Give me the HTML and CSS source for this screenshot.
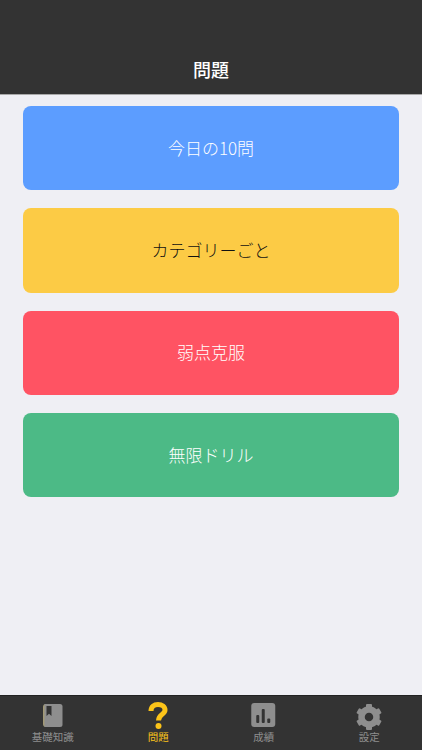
FILE: index.html
```html
<!DOCTYPE html>
<html lang="ja">
<head>
    <meta charset="UTF-8">
    <meta name="viewport" content="width=device-width, initial-scale=1.0">
    <title>問題</title>
    <link rel="stylesheet" href="styles.css">
</head>
<body>
    <div class="app">
        <header class="nav-bar">
            <h1>問題</h1>
        </header>
        <main class="menu">
            <a class="menu-item blue">今日の10問</a>
            <a class="menu-item yellow">カテゴリーごと</a>
            <a class="menu-item red">弱点克服</a>
            <a class="menu-item green">無限ドリル</a>
        </main>
        <nav class="tab-bar">
            <a class="tab">
                <svg class="tab-icon" width="32" height="28" viewBox="0 0 32 28">
                    <path fill="#a39a76" d="M6 5q0-3 3-3h2v23H9q-3 0-3-3z"/>
                    <path fill="#8e8e8e" d="M7.500 2H23q2.500 0 2.500 2.500v18q0 2.500-2.500 2.500H7.500z"/>
                    <path fill="#333" d="M9.500 4h5v10l-2.500-2.200L9.500 14z"/>
                </svg>
                <span>基礎知識</span>
            </a>
            <a class="tab active">
                <svg class="tab-icon" width="32" height="28" viewBox="0 0 32 28">
                    <path fill="none" stroke="#fcc419" stroke-width="5" d="M9 9C9 4.500 12 2.500 16 2.500S23 4.500 23 8C23 12.500 16.500 12.500 16.500 18.500"/>
                    <circle fill="#fcc419" cx="16.500" cy="24" r="3"/>
                </svg>
                <span>問題</span>
            </a>
            <a class="tab">
                <svg class="tab-icon" width="32" height="28" viewBox="0 0 32 28">
                    <rect fill="#8e8e8e" x="3.250" y="1" width="24" height="24" rx="3"/>
                    <rect fill="#333" x="8.250" y="13" width="3" height="8" rx="1"/>
                    <rect fill="#333" x="13.750" y="7" width="3" height="14" rx="1"/>
                    <rect fill="#333" x="19.250" y="16.500" width="3" height="4.500" rx="1"/>
                </svg>
                <span>成績</span>
            </a>
            <a class="tab">
                <svg class="tab-icon" width="32" height="28" viewBox="0 -1 32 28">
                    <circle fill="none" stroke="#8e8e8e" stroke-width="6.500" cx="16" cy="14" r="7.500"/>
                    <g fill="#8e8e8e">
                        <rect x="13" y="1" width="6" height="5" rx="1"/>
                        <rect x="13" y="22" width="6" height="5" rx="1"/>
                        <rect x="13" y="22" width="6" height="5" rx="1" transform="rotate(60 16 14)"/>
                        <rect x="13" y="22" width="6" height="5" rx="1" transform="rotate(120 16 14)"/>
                        <rect x="13" y="22" width="6" height="5" rx="1" transform="rotate(240 16 14)"/>
                        <rect x="13" y="22" width="6" height="5" rx="1" transform="rotate(300 16 14)"/>
                    </g>
                </svg>
                <span>設定</span>
            </a>
        </nav>
    </div>
</body>
</html>
```

FILE: styles.css
```css
* {
    box-sizing: border-box;
}
body {
    margin: 0;
    font-family: "Noto Sans CJK JP", "Noto Sans", sans-serif;
    background-color: #efeff4;
}
.app {
    display: flex;
    flex-direction: column;
    width: 422px;
    height: 750px;
    overflow: hidden;
}
.nav-bar {
    display: flex;
    align-items: flex-end;
    justify-content: center;
    height: 95px;
    padding-bottom: 13px;
    background-color: #333333;
    border-bottom: 1px solid #a8a8a8;
}
.nav-bar h1 {
    margin: 0;
    color: #ffffff;
    font-size: 18px;
    font-weight: 500;
    line-height: 24px;
}
.menu {
    flex: 1;
    display: flex;
    flex-direction: column;
    gap: 18px;
    padding: 11px 23px 0;
}
.menu-item {
    display: flex;
    align-items: center;
    justify-content: center;
    height: 84.3px;
    padding-bottom: 2px;
    border-radius: 8px;
    color: #ffffff;
    font-size: 17px;
    font-weight: 300;
}
.blue {
    background-color: #5c9dff;
}
.yellow {
    background-color: #fccb45;
    color: #111111;
}
.red {
    background-color: #ff5363;
}
.green {
    background-color: #4cba86;
}
.tab-bar {
    display: flex;
    height: 55px;
    background-color: #333333;
    border-top: 1px solid #222222;
}
.tab {
    flex: 1;
    display: flex;
    flex-direction: column;
    align-items: center;
    padding-top: 6px;
    color: #8e8e8e;
    font-size: 10.5px;
    line-height: 14px;
}
.tab-icon {
    display: block;
}
.tab.active {
    color: #fcc419;
}
```
